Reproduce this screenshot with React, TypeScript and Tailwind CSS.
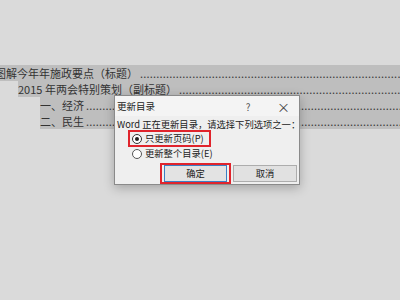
const dots = ".".repeat(200);

const tocLines = [
  { text: "图解今年年施政要点（标题）", indent: "ml-[-5px]" },
  { text: "2015 年两会特别策划（副标题）", indent: "ml-[18px]" },
  { text: "一、经济", indent: "ml-[40px]" },
  { text: "二、民生", indent: "ml-[40px]" },
];

function Radio({ checked }: { checked: boolean }) {
  return (
    <span
      className={`flex h-[10px] w-[10px] shrink-0 items-center justify-center rounded-full border bg-white ${
        checked ? "border-[#333]" : "border-[#555]"
      }`}
    >
      {checked && <span className="h-[4px] w-[4px] rounded-full bg-[#222]" />}
    </span>
  );
}

export default function App() {
  return (
    <div
      className="relative h-[300px] w-[400px] overflow-hidden bg-[#dadada] text-[#333]"
      style={{ fontFamily: '"Noto Sans CJK SC", "Noto Sans", sans-serif' }}
    >
      <div className="flex flex-col pt-[65px]">
        {tocLines.map((l) => (
          <div
            key={l.text}
            className={`flex h-[16px] items-center overflow-hidden whitespace-nowrap bg-[#bebebe] text-[11px] leading-[16px] ${l.indent}`}
          >
            <span className="shrink-0 pr-[2px]">{l.text}</span>
            <span className="min-w-0 flex-1 overflow-hidden tracking-[0.2px] text-[#3a3a3a]">{dots}</span>
          </div>
        ))}
      </div>

      <div className="absolute left-[114px] top-[95px] flex h-[90px] w-[186px] flex-col border border-[#8a8a8a] bg-[#efefef] text-[9.3px] text-[#222] shadow-[0_3px_10px_rgba(0,0,0,0.25)]">
        <div className="flex h-[20px] items-center bg-[#f4f4f4] pl-[2px]">
          <span className="text-[9.5px]">更新目录</span>
          <span className="ml-auto w-[10px] text-center text-[10px] text-[#555]">?</span>
          <span className="ml-[24px] mr-[10px] w-[12px] text-center text-[13px] leading-none text-[#444]">×</span>
        </div>
        <div className="flex flex-col pl-[2px]">
          <div className="h-[14px] pt-[2px] leading-[12px] whitespace-nowrap">Word 正在更新目录，请选择下列选项之一：</div>
          <div className="ml-[11px] flex h-[17px] w-[83px] items-center gap-[3px] border-2 border-[#e0242c] pl-[2px]">
            <Radio checked />
            <span className="whitespace-nowrap">只更新页码(P)</span>
          </div>
          <div className="ml-[15px] flex h-[14px] items-center gap-[3px]">
            <Radio checked={false} />
            <span className="whitespace-nowrap">更新整个目录(E)</span>
          </div>
          <div className="mt-[2px] flex items-center">
            <div className="ml-[43px] flex h-[21px] w-[71px] items-center justify-center border-2 border-[#e0242c]">
              <div className="flex h-[17px] w-[63px] items-center justify-center border border-[#3b7fc4] bg-[#e3e3e3]">
                确定
              </div>
            </div>
            <div className="ml-[2px] flex h-[17px] w-[64px] items-center justify-center border border-[#adadad] bg-[#e1e1e1]">
              取消
            </div>
          </div>
        </div>
      </div>
    </div>
  );
}
